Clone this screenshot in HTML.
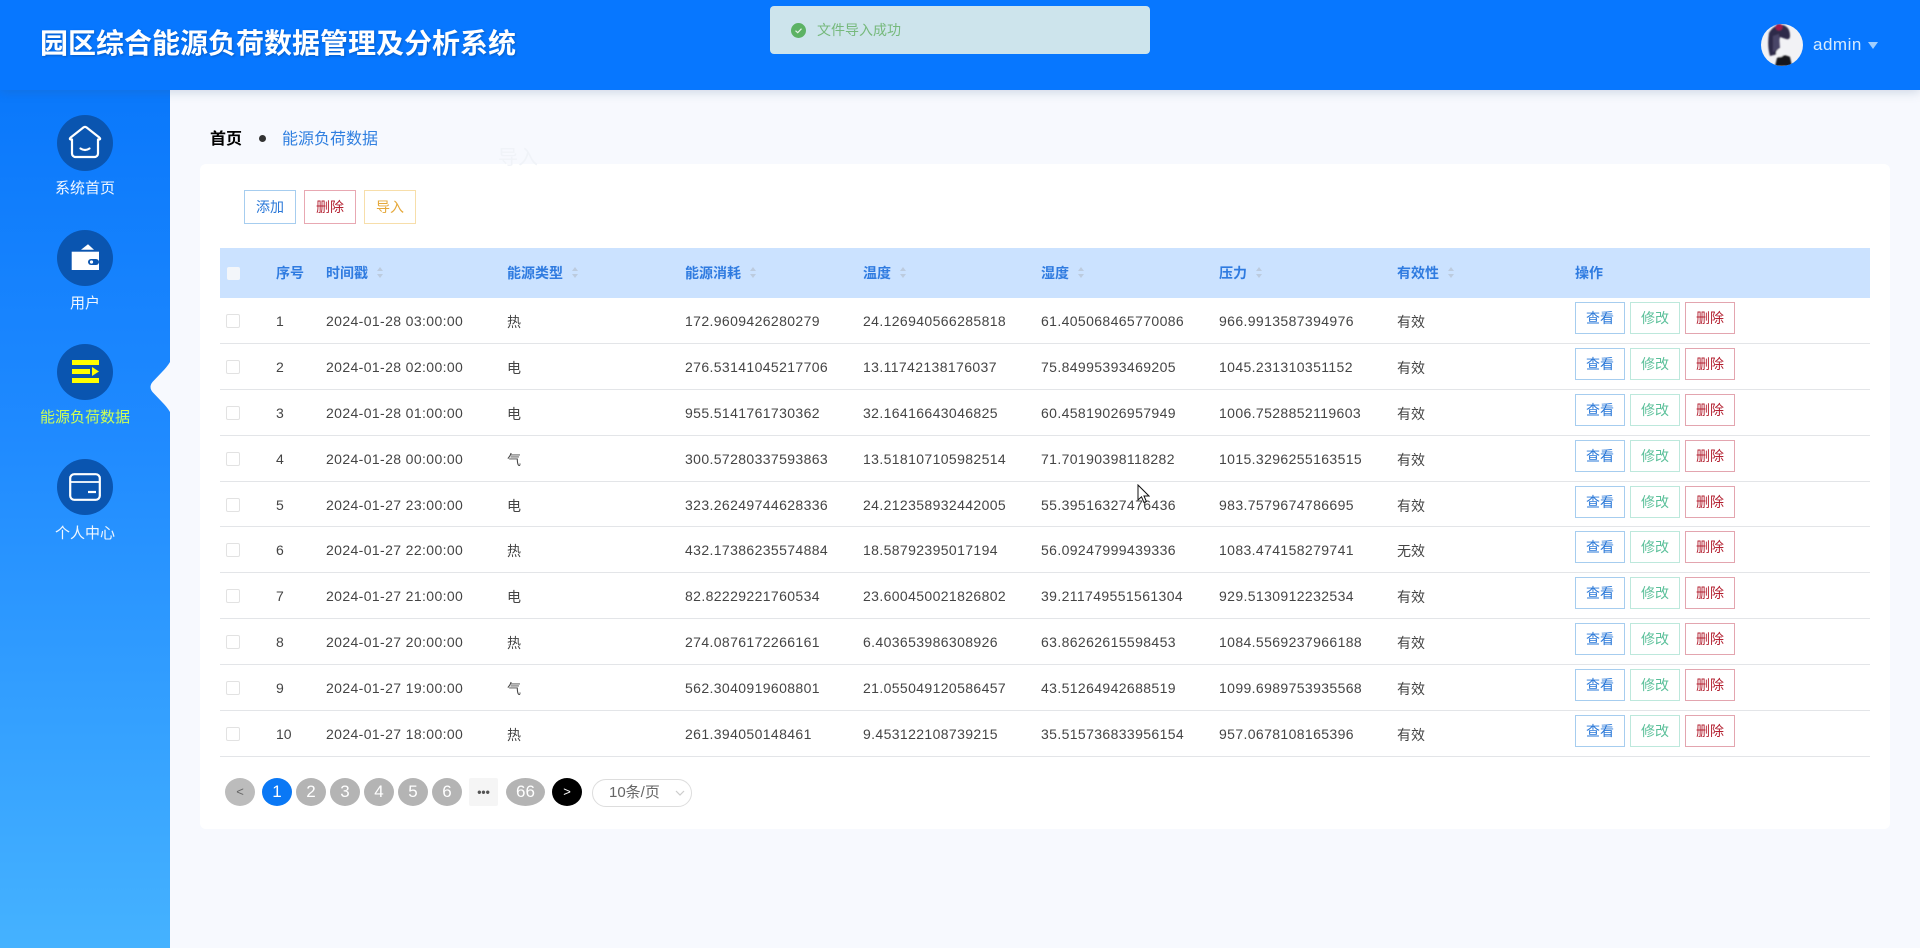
<!DOCTYPE html>
<html lang="zh-CN"><head><meta charset="utf-8"><title>园区综合能源负荷数据管理及分析系统</title>
<style>
*{box-sizing:border-box;margin:0;padding:0}
html,body{width:1920px;height:948px;overflow:hidden;background:#f7f9fe;font-family:"Liberation Sans","Noto Sans CJK SC",sans-serif;color:#444}
#hdr{position:absolute;left:0;top:0;width:1920px;height:90px;background:#0777ff;box-shadow:0 2px 10px rgba(60,90,130,.22);z-index:3}
#title{position:absolute;left:40px;top:27px;font-size:28px;line-height:34px;font-weight:700;color:#fff;white-space:nowrap;text-shadow:1px 1px 2px rgba(0,40,90,.35)}
#side{position:absolute;left:0;top:90px;width:170px;height:858px;background:linear-gradient(180deg,#0a78fb 0%,#1f8aff 40%,#45b2ff 100%);z-index:2}
.circ{position:absolute;left:57px;width:56px;height:56px;border-radius:50%;background:#0a55b0}
.lab{position:absolute;left:0;width:170px;text-align:center;font-size:15px;line-height:20px;color:#f0f7ff;white-space:nowrap}
#crumb1{position:absolute;left:210px;top:129px;font-size:16px;line-height:22px;font-weight:700;color:#000}
#dot{position:absolute;left:259px;top:135px;width:7px;height:7px;border-radius:50%;background:#333}
#crumb2{position:absolute;left:282px;top:129px;font-size:16px;line-height:22px;color:#2f7fe0}
#card{position:absolute;left:200px;top:164px;width:1690px;height:665px;background:#fff;border-radius:6px}
.tb{position:absolute;top:190px;width:52px;height:34px;background:#fff;border:1px solid;font-size:14px;line-height:32px;text-align:center}
#thead{position:absolute;left:220px;top:248px;width:1650px;height:50px;background:#cbe2ff}
.th{position:absolute;top:0;line-height:50px;font-size:14px;font-weight:700;color:#2f7be0;white-space:nowrap}
.sort{position:absolute;top:18px;width:8px;height:13px}
#body{position:absolute;left:220px;top:298px;width:1650px}
.r{position:relative;height:45.9px;border-bottom:1px solid #e3e5e8;background:#fff;font-size:14px;color:#444}
.r span{position:absolute;top:0;line-height:46px;white-space:nowrap}
.r .c{top:1px}
.r .n{letter-spacing:.38px}
.cb{position:absolute;left:6px;top:16px;width:14px;height:14px;border:1px solid #e2e2e2;border-radius:2px;background:#fff}
.r b{position:absolute;top:4px;width:50px;height:32px;background:#fff;border:1px solid;font-weight:400;font-size:14px;line-height:30px;text-align:center}
.v{left:1355px;color:#2a78d8;border-color:#a6cdef!important}
.e{left:1410px;color:#5bc09a;border-color:#bde8dc!important}
.d{left:1465px;color:#b32030;border-color:#e3a5af!important}
.pg{position:absolute;top:778px;height:28px;width:30px;border-radius:50%;background:#b4b4b4;color:#fff;font-size:17px;line-height:28px;text-align:center}
</style></head><body>

<div id="card"></div>
<div style="position:absolute;left:498px;top:144px;font-size:20px;line-height:28px;color:#f0f3f8">导入</div>

<div id="crumb1">首页</div><div id="dot"></div><div id="crumb2">能源负荷数据</div>

<div class="tb" style="left:244px;color:#2a78d8;border-color:#a6cdef">添加</div>
<div class="tb" style="left:304px;color:#b32030;border-color:#e8a8b2">删除</div>
<div class="tb" style="left:364px;color:#e5a83a;border-color:#f7deaa">导入</div>

<div id="thead">
<div style="position:absolute;left:7px;top:19px;width:13px;height:13px;background:#f3f6fa;border-radius:2px"></div>
<div class="th" style="left:56px">序号</div>
<div class="th" style="left:106px">时间戳</div>
<svg class="sort" style="left:156px" viewBox="0 0 8 13"><path d="M4 1L7 5H1zM1 8h6l-3 4z" fill="#bccbde"/></svg>
<div class="th" style="left:287px">能源类型</div>
<svg class="sort" style="left:351px" viewBox="0 0 8 13"><path d="M4 1L7 5H1zM1 8h6l-3 4z" fill="#bccbde"/></svg>
<div class="th" style="left:465px">能源消耗</div>
<svg class="sort" style="left:529px" viewBox="0 0 8 13"><path d="M4 1L7 5H1zM1 8h6l-3 4z" fill="#bccbde"/></svg>
<div class="th" style="left:643px">温度</div>
<svg class="sort" style="left:679px" viewBox="0 0 8 13"><path d="M4 1L7 5H1zM1 8h6l-3 4z" fill="#bccbde"/></svg>
<div class="th" style="left:821px">湿度</div>
<svg class="sort" style="left:857px" viewBox="0 0 8 13"><path d="M4 1L7 5H1zM1 8h6l-3 4z" fill="#bccbde"/></svg>
<div class="th" style="left:999px">压力</div>
<svg class="sort" style="left:1035px" viewBox="0 0 8 13"><path d="M4 1L7 5H1zM1 8h6l-3 4z" fill="#bccbde"/></svg>
<div class="th" style="left:1177px">有效性</div>
<svg class="sort" style="left:1227px" viewBox="0 0 8 13"><path d="M4 1L7 5H1zM1 8h6l-3 4z" fill="#bccbde"/></svg>
<div class="th" style="left:1355px">操作</div>
</div>

<div id="body">
<div class="r"><i class="cb"></i><span style="left:56px">1</span><span class="n" style="left:106px">2024-01-28 03:00:00</span><span class="c" style="left:287px">热</span><span class="n" style="left:465px">172.9609426280279</span><span class="n" style="left:643px">24.126940566285818</span><span class="n" style="left:821px">61.405068465770086</span><span class="n" style="left:999px">966.9913587394976</span><span class="c" style="left:1177px">有效</span><b class="v">查看</b><b class="e">修改</b><b class="d">删除</b></div>
<div class="r"><i class="cb"></i><span style="left:56px">2</span><span class="n" style="left:106px">2024-01-28 02:00:00</span><span class="c" style="left:287px">电</span><span class="n" style="left:465px">276.53141045217706</span><span class="n" style="left:643px">13.11742138176037</span><span class="n" style="left:821px">75.84995393469205</span><span class="n" style="left:999px">1045.231310351152</span><span class="c" style="left:1177px">有效</span><b class="v">查看</b><b class="e">修改</b><b class="d">删除</b></div>
<div class="r"><i class="cb"></i><span style="left:56px">3</span><span class="n" style="left:106px">2024-01-28 01:00:00</span><span class="c" style="left:287px">电</span><span class="n" style="left:465px">955.5141761730362</span><span class="n" style="left:643px">32.16416643046825</span><span class="n" style="left:821px">60.45819026957949</span><span class="n" style="left:999px">1006.7528852119603</span><span class="c" style="left:1177px">有效</span><b class="v">查看</b><b class="e">修改</b><b class="d">删除</b></div>
<div class="r"><i class="cb"></i><span style="left:56px">4</span><span class="n" style="left:106px">2024-01-28 00:00:00</span><span class="c" style="left:287px">气</span><span class="n" style="left:465px">300.57280337593863</span><span class="n" style="left:643px">13.518107105982514</span><span class="n" style="left:821px">71.70190398118282</span><span class="n" style="left:999px">1015.3296255163515</span><span class="c" style="left:1177px">有效</span><b class="v">查看</b><b class="e">修改</b><b class="d">删除</b></div>
<div class="r"><i class="cb"></i><span style="left:56px">5</span><span class="n" style="left:106px">2024-01-27 23:00:00</span><span class="c" style="left:287px">电</span><span class="n" style="left:465px">323.26249744628336</span><span class="n" style="left:643px">24.212358932442005</span><span class="n" style="left:821px">55.39516327476436</span><span class="n" style="left:999px">983.7579674786695</span><span class="c" style="left:1177px">有效</span><b class="v">查看</b><b class="e">修改</b><b class="d">删除</b></div>
<div class="r"><i class="cb"></i><span style="left:56px">6</span><span class="n" style="left:106px">2024-01-27 22:00:00</span><span class="c" style="left:287px">热</span><span class="n" style="left:465px">432.17386235574884</span><span class="n" style="left:643px">18.58792395017194</span><span class="n" style="left:821px">56.09247999439336</span><span class="n" style="left:999px">1083.474158279741</span><span class="c" style="left:1177px">无效</span><b class="v">查看</b><b class="e">修改</b><b class="d">删除</b></div>
<div class="r"><i class="cb"></i><span style="left:56px">7</span><span class="n" style="left:106px">2024-01-27 21:00:00</span><span class="c" style="left:287px">电</span><span class="n" style="left:465px">82.82229221760534</span><span class="n" style="left:643px">23.600450021826802</span><span class="n" style="left:821px">39.211749551561304</span><span class="n" style="left:999px">929.5130912232534</span><span class="c" style="left:1177px">有效</span><b class="v">查看</b><b class="e">修改</b><b class="d">删除</b></div>
<div class="r"><i class="cb"></i><span style="left:56px">8</span><span class="n" style="left:106px">2024-01-27 20:00:00</span><span class="c" style="left:287px">热</span><span class="n" style="left:465px">274.0876172266161</span><span class="n" style="left:643px">6.403653986308926</span><span class="n" style="left:821px">63.86262615598453</span><span class="n" style="left:999px">1084.5569237966188</span><span class="c" style="left:1177px">有效</span><b class="v">查看</b><b class="e">修改</b><b class="d">删除</b></div>
<div class="r"><i class="cb"></i><span style="left:56px">9</span><span class="n" style="left:106px">2024-01-27 19:00:00</span><span class="c" style="left:287px">气</span><span class="n" style="left:465px">562.3040919608801</span><span class="n" style="left:643px">21.055049120586457</span><span class="n" style="left:821px">43.51264942688519</span><span class="n" style="left:999px">1099.6989753935568</span><span class="c" style="left:1177px">有效</span><b class="v">查看</b><b class="e">修改</b><b class="d">删除</b></div>
<div class="r"><i class="cb"></i><span style="left:56px">10</span><span class="n" style="left:106px">2024-01-27 18:00:00</span><span class="c" style="left:287px">热</span><span class="n" style="left:465px">261.394050148461</span><span class="n" style="left:643px">9.453122108739215</span><span class="n" style="left:821px">35.515736833956154</span><span class="n" style="left:999px">957.0678108165396</span><span class="c" style="left:1177px">有效</span><b class="v">查看</b><b class="e">修改</b><b class="d">删除</b></div>
</div>

<div class="pg" style="left:225px;background:#bcbcbc;color:#666;font-size:13px">&lt;</div>
<div class="pg" style="left:262px;background:#0a78f5">1</div>
<div class="pg" style="left:296px">2</div>
<div class="pg" style="left:330px">3</div>
<div class="pg" style="left:364px">4</div>
<div class="pg" style="left:398px">5</div>
<div class="pg" style="left:432px">6</div>
<div class="pg" style="left:469px;width:29px;background:#f5f5f5;border-radius:2px;color:#555;font-size:12px;font-weight:700;line-height:28px">•••</div>
<div class="pg" style="left:506px;width:39px">66</div>
<div class="pg" style="left:552px;background:#000;font-size:13px">&gt;</div>
<div style="position:absolute;left:592px;top:779px;width:100px;height:28px;border:1px solid #ddd;border-radius:14px;background:#fff;font-size:15px;line-height:26px;color:#666;padding-left:16px">10条/页
<svg style="position:absolute;left:82px;top:10px" width="10" height="7" viewBox="0 0 10 7"><path d="M1 1l4 4 4-4" fill="none" stroke="#ccc" stroke-width="1.2"/></svg></div>

<div id="hdr">
<div id="title">园区综合能源负荷数据管理及分析系统</div>
<svg style="position:absolute;left:1761px;top:24px" width="42" height="42" viewBox="0 0 42 42"><defs><clipPath id="av"><circle cx="21" cy="21" r="21"/></clipPath><filter id="bl"><feGaussianBlur stdDeviation="0.9"/></filter></defs><g clip-path="url(#av)"><rect width="42" height="42" fill="#f2f2f5"/><g filter="url(#bl)"><path d="M8 9Q13 0 22 1Q29 3 29 12Q29 16 25 15L19 13Q17 22 17 30L9 32Q6 22 8 9z" fill="#2e2a48"/><circle cx="18" cy="3" r="3.500" fill="#9a1a4c"/><path d="M12 12l6-2 1 14-7 4z" fill="#4a4468"/><path d="M16 34q6-5 13-1l2 9H14z" fill="#17161e"/><circle cx="19" cy="29" r="4" fill="#f4f4f6"/></g></g></svg>
<div style="position:absolute;left:1813px;top:33px;font-size:17px;line-height:24px;letter-spacing:.5px;color:#d6ecff">admin</div>
<svg style="position:absolute;left:1868px;top:42px" width="10" height="7" viewBox="0 0 10 7"><path d="M0 0h10L5 7z" fill="#a3cffd"/></svg>
</div>

<div id="side">
<svg style="position:absolute;left:150px;top:272px;overflow:visible" width="20" height="50" viewBox="0 0 20 50"><path d="M20 0Q17 5 12 10L2.500 20Q-1.500 25 2.500 30L12 40Q17 45 20 50z" fill="#f7f9fe"/></svg>

<div class="circ" style="top:25px"></div>
<svg style="position:absolute;left:68px;top:35px" width="34" height="34" viewBox="0 0 34 34"><path d="M2.500 14.500Q1 14 3 12.200L15.500 2.400Q17 1.300 18.500 2.400L31 12.200Q33 14 31.500 14.500H30V28.500a3.500 3.500 0 0 1-3.500 3.500H7.500a3.500 3.500 0 0 1-3.500-3.500V14.500z" fill="none" stroke="#fff" stroke-width="2.200" stroke-linejoin="round"/><path d="M12.500 23.500q4.500 3 9 0" fill="none" stroke="#fff" stroke-width="2.200" stroke-linecap="round"/></svg>
<div class="lab" style="top:89px">系统首页</div>

<div class="circ" style="top:140px"></div>
<svg style="position:absolute;left:71px;top:153px" width="29" height="28" viewBox="0 0 29 28"><path d="M10 6.800L17 1.300 23 6.800z" fill="#fff"/><rect x=".7" y="8.700" width="27.300" height="18.300" fill="#fff"/><rect x="17" y="16" width="11" height="6" rx="3" fill="#0a55b0"/><circle cx="20.500" cy="19" r="1.600" fill="#fff"/></svg>
<div class="lab" style="top:204px">用户</div>

<div class="circ" style="top:254px"></div>
<svg style="position:absolute;left:72px;top:270px" width="27" height="23" viewBox="0 0 27 23"><path d="M0 0h27v5H0zM0 9h18v5H0zM0 18h27v5H0zM20 7l7 4.500-7 4.500z" fill="#ffff00"/></svg>
<div class="lab" style="top:318px;color:#cdff55">能源负荷数据</div>

<div class="circ" style="top:369px"></div>
<svg style="position:absolute;left:69px;top:383px" width="32" height="28" viewBox="0 0 32 28"><rect x="1.200" y="1.200" width="29.600" height="25.600" rx="4" fill="none" stroke="#fff" stroke-width="2.200"/><path d="M1 9h30" stroke="#fff" stroke-width="1.800"/><path d="M19 19h8" stroke="#fff" stroke-width="2.200"/></svg>
<div class="lab" style="top:434px">个人中心</div>
</div>

<div style="position:absolute;left:770px;top:6px;width:380px;height:48px;background:#cde4ec;border-radius:4px;z-index:5">
<svg style="position:absolute;left:21px;top:17px" width="15" height="15" viewBox="0 0 15 15"><circle cx="7.500" cy="7.500" r="7.500" fill="#5cb264"/><path d="M4.500 7.700l2.200 2 3.800-4" fill="none" stroke="#e4f3e6" stroke-width="1.200"/></svg>
<div style="position:absolute;left:47px;top:13px;font-size:14px;line-height:22px;color:#76b97c">文件导入成功</div>
</div>

<svg style="position:absolute;left:1137px;top:484px;z-index:6" width="13" height="20" viewBox="0 0 13 20"><path d="M1 1v15l3.500-3.200L7 18.500l2.400-1-2.400-5.500h5z" fill="#fff" stroke="#111" stroke-width="1"/></svg>
</body></html>
